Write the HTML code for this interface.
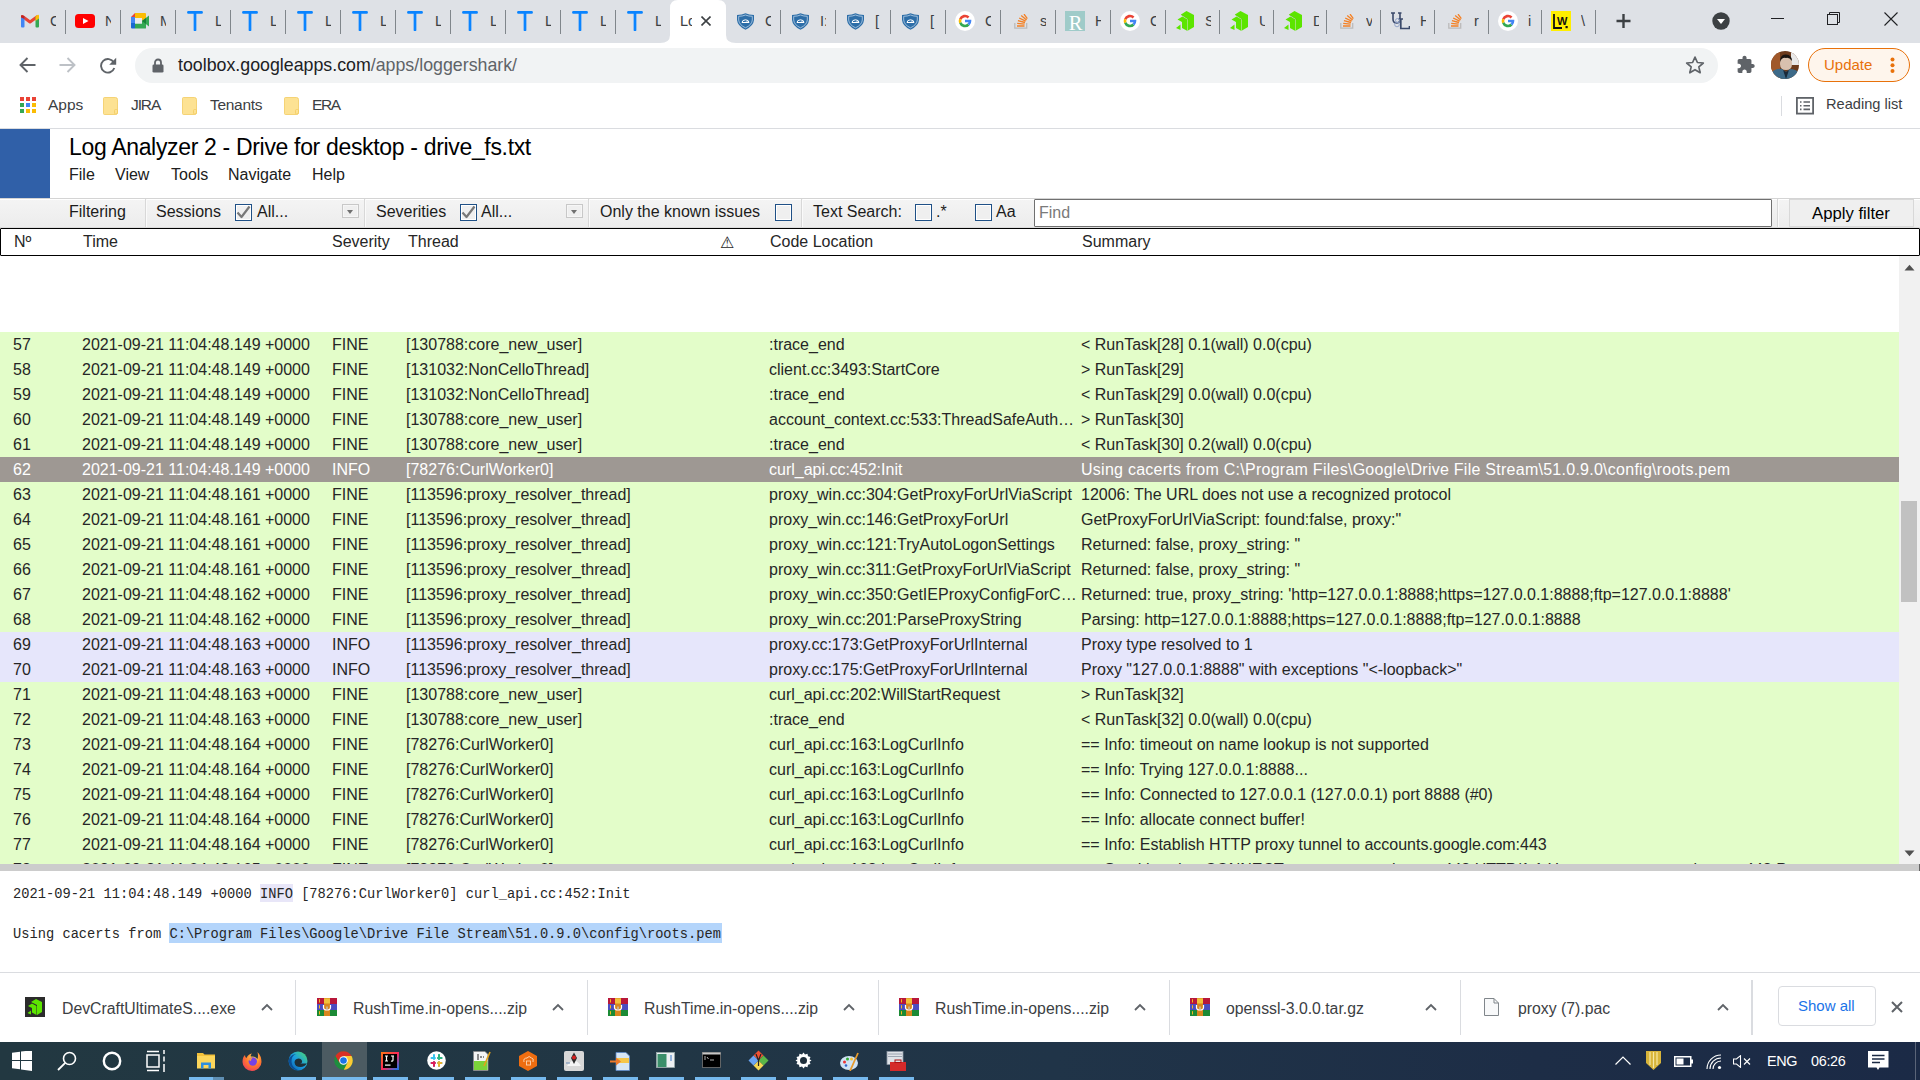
<!DOCTYPE html>
<html><head><meta charset="utf-8"><title>Log Analyzer</title>
<style>
*{margin:0;padding:0;box-sizing:border-box}
html,body{width:1920px;height:1080px;overflow:hidden;background:#fff;font-family:"Liberation Sans",sans-serif;position:relative}
.abs{position:absolute}
/* chrome tab strip */
#tabstrip{position:absolute;left:0;top:0;width:1920px;height:43px;background:#dee1e6}
.tsep{position:absolute;top:10px;width:1px;height:24px;background:#80868b}
#acttab{position:absolute;left:670px;top:0;width:56px;height:43px;background:#fff;border-radius:8px 8px 0 0}
/* toolbar */
#toolbar{position:absolute;left:0;top:43px;width:1920px;height:44px;background:#fff}
#omni{position:absolute;left:135px;top:48px;width:1583px;height:35px;background:#f1f3f4;border-radius:18px}
#url{position:absolute;left:178px;top:55px;font-size:17.8px;color:#202124}
#url span{color:#5f6368}
#bookmarks{position:absolute;left:0;top:87px;width:1920px;height:42px;background:#fff;border-bottom:1px solid #dadce0}
.bm{position:absolute;top:96px;font-size:15.5px;color:#3c4043}
/* app */
#bluesq{position:absolute;left:0;top:129px;width:50px;height:69px;background:#3060a8}
#title{position:absolute;left:69px;top:134px;font-size:23px;letter-spacing:-0.33px;color:#000}
.menu{position:absolute;top:166px;font-size:16px;color:#202020}
#filterbar{position:absolute;left:0;top:198px;width:1920px;height:30px;background:linear-gradient(#f4f4f4,#ececec);border-top:1px solid #d4d4d4;box-shadow:inset 0 1px 0 #fff, inset 0 -1px 0 #dcdcdc}
.ft{position:absolute;top:203px;font-size:16px;color:#1c1c1c}
.fsep{position:absolute;top:199px;width:2px;height:28px;border-left:1px solid #d8d8d8;border-right:1px solid #fafafa}
.cb{position:absolute;top:204px;width:17px;height:17px;border:1.5px solid #2d4f7c;background:#fff}
.dd{position:absolute;top:204px;width:17px;height:14px;border:1px solid #c8c8c8;background:#f4f4f4}
#find{position:absolute;left:1034px;top:199px;width:738px;height:28px;background:#fff;border:1px solid #707070;border-radius:1px}
#findt{position:absolute;left:1039px;top:204px;font-size:16px;color:#7a7a7a}
#apply{position:absolute;left:1789px;top:199px;width:125px;height:28px;background:#efefef;border:1px solid #d8d8d8}
#thead{position:absolute;left:0;top:228px;width:1920px;height:28px;border:1px solid #000;border-radius:1px;background:#fff}
.th{position:absolute;top:233px;font-size:16px;color:#262626}
/* rows */
.r{position:absolute;left:0;width:1899px;height:25px;background:#e3fdc9;font-size:16px;color:#262626;white-space:nowrap;overflow:hidden}
.r.info{background:#e6e6fb}
.r.sel{background:#9e9893;color:#fff}
.r span{position:absolute;top:4px}
.c0{left:13px}.c1{left:82px}.c2{left:332px}.c3{left:406px}.c4{left:769px;width:309px;overflow:hidden;text-overflow:ellipsis}.c5{left:1081px}
#rowclip{position:absolute;left:0;top:256px;width:1920px;height:608px;overflow:hidden}
#vscroll{position:absolute;left:1899px;top:256px;width:21px;height:608px;background:#f1f1f1}
#thumb{position:absolute;left:1901px;top:501px;width:16px;height:101px;background:#c1c1c1}
#splitter{position:absolute;left:0;top:864px;width:1920px;height:7px;background:#cccccc}
/* detail */
.mono{position:absolute;left:13px;font-family:"Liberation Mono",monospace;font-size:13.72px;color:#262626;white-space:pre}
/* download shelf */
#shelf{position:absolute;left:0;top:972px;width:1920px;height:70px;background:#fff;border-top:1px solid #dadce0}
.dl{position:absolute;top:1000px;font-size:15.8px;color:#3c4043}
.dsep{position:absolute;top:980px;width:1px;height:55px;background:#dadce0}
/* taskbar */
#taskbar{position:absolute;left:0;top:1042px;width:1920px;height:38px;background:linear-gradient(90deg,#223841 0%,#213645 35%,#203448 55%,#1d2d46 80%,#1b2a46 100%)}
.ttxt{position:absolute;top:13px;width:5.5px;height:19px;overflow:hidden;font-size:14.5px;color:#3c4043;white-space:nowrap}
#update{position:absolute;left:1808px;top:48px;width:102px;height:34px;border:1.5px solid #e8710a;border-radius:17px;background:#fef5ec}
#updt{position:absolute;left:1824px;top:56px;font-size:15px;color:#e8710a}
#showall{position:absolute;left:1778px;top:986px;width:98px;height:40px;border:1px solid #dadce0;border-radius:4px;background:#fff}
#showt{position:absolute;left:1798px;top:997px;font-size:15px;color:#1a73e8}

#hl1{position:absolute;left:260px;top:884px;width:33px;height:18px;background:#e8e6f8}
#hl2{position:absolute;left:169px;top:923px;width:553px;height:20px;background:#b4d5fb}

</style></head><body>
<div id="tabstrip"></div>
<div class="tsep" style="left:65.0px"></div>
<div class="tsep" style="left:120.0px"></div>
<div class="tsep" style="left:175.0px"></div>
<div class="tsep" style="left:230.0px"></div>
<div class="tsep" style="left:285.0px"></div>
<div class="tsep" style="left:340.0px"></div>
<div class="tsep" style="left:395.0px"></div>
<div class="tsep" style="left:450.0px"></div>
<div class="tsep" style="left:505.0px"></div>
<div class="tsep" style="left:560.0px"></div>
<div class="tsep" style="left:615.0px"></div>
<div class="tsep" style="left:780.0px"></div>
<div class="tsep" style="left:835.0px"></div>
<div class="tsep" style="left:890.0px"></div>
<div class="tsep" style="left:945.0px"></div>
<div class="tsep" style="left:1000.0px"></div>
<div class="tsep" style="left:1055.0px"></div>
<div class="tsep" style="left:1110.0px"></div>
<div class="tsep" style="left:1165.0px"></div>
<div class="tsep" style="left:1219.0px"></div>
<div class="tsep" style="left:1273.0px"></div>
<div class="tsep" style="left:1326.0px"></div>
<div class="tsep" style="left:1380.0px"></div>
<div class="tsep" style="left:1434.0px"></div>
<div class="tsep" style="left:1488.0px"></div>
<div class="tsep" style="left:1541.0px"></div>
<div class="tsep" style="left:1595.0px"></div>
<svg class="abs" style="left:660px;top:0" width="76" height="43" viewBox="0 0 76 43"><path d="M0 43 Q10 43 10 35 L10 8 Q10 0 18 0 L58 0 Q66 0 66 8 L66 35 Q66 43 76 43z" fill="#fff"/></svg>
<svg class="abs" style="left:21px;top:14px" width="18" height="14" viewBox="0 0 18 14" ><path d="M1.5 2.5 L9 8 L16.5 2.5" fill="none" stroke="#ea4335" stroke-width="3" stroke-linejoin="round"/><rect x="0" y="2.5" width="3.5" height="11" rx="1" fill="#4285f4"/><rect x="14.5" y="2.5" width="3.5" height="11" rx="1" fill="#34a853"/><path d="M14.5 2.2 L17 0.8 Q18 0.6 18 2 L18 4.5 L14.5 7z" fill="#fbbc04"/><path d="M0 2 Q0 0.5 1.5 1 L3.5 2.5 L3.5 5 L0 3.5z" fill="#c5221f"/></svg>
<div class="ttxt" style="left:50.0px">C</div>
<svg class="abs" style="left:75px;top:14px" width="20" height="14" viewBox="0 0 20 14" ><rect x="0" y="0" width="20" height="14" rx="3.5" fill="#ff0000"/><path d="M8 4 L13.5 7 L8 10z" fill="#fff"/></svg>
<div class="ttxt" style="left:105.0px">N</div>
<svg class="abs" style="left:131px;top:13px" width="18" height="16" viewBox="0 0 18 16" ><path d="M4 0 L14 0 Q15 0 15 1 L15 5 L11 8 L4 5z" fill="#fbbc04"/><path d="M0 4 L4 0 L4 4z" fill="#ea4335"/><rect x="0" y="4" width="4" height="6" fill="#4285f4"/><path d="M0 10 L4 10 L4 15.5 L1 15.5 Q0 15.5 0 14.5z" fill="#1967d2"/><path d="M4 10.5 L11 10.5 L11 8 L15 5.5 L15 15 Q15 15.5 14 15.5 L4 15.5z" fill="#34a853"/><path d="M11 8 L18 2.5 L18 13.5 L11 8z" fill="#34a853"/><path d="M11 8 L15 5 L15 11z" fill="#188038"/><rect x="4" y="5" width="7" height="5.5" fill="#e8eaed"/></svg>
<div class="ttxt" style="left:160.0px">M</div>
<svg class="abs" style="left:187px;top:11px" width="16" height="20" viewBox="0 0 16 20" ><path d="M1.4 1.4 H14.6 M8 1.4 V19" stroke="#0a84ff" stroke-width="2.7" stroke-linecap="round" fill="none"/></svg>
<div class="ttxt" style="left:215.0px">L</div>
<svg class="abs" style="left:242px;top:11px" width="16" height="20" viewBox="0 0 16 20" ><path d="M1.4 1.4 H14.6 M8 1.4 V19" stroke="#0a84ff" stroke-width="2.7" stroke-linecap="round" fill="none"/></svg>
<div class="ttxt" style="left:270.0px">L</div>
<svg class="abs" style="left:297px;top:11px" width="16" height="20" viewBox="0 0 16 20" ><path d="M1.4 1.4 H14.6 M8 1.4 V19" stroke="#0a84ff" stroke-width="2.7" stroke-linecap="round" fill="none"/></svg>
<div class="ttxt" style="left:325.0px">L</div>
<svg class="abs" style="left:352px;top:11px" width="16" height="20" viewBox="0 0 16 20" ><path d="M1.4 1.4 H14.6 M8 1.4 V19" stroke="#0a84ff" stroke-width="2.7" stroke-linecap="round" fill="none"/></svg>
<div class="ttxt" style="left:380.0px">L</div>
<svg class="abs" style="left:407px;top:11px" width="16" height="20" viewBox="0 0 16 20" ><path d="M1.4 1.4 H14.6 M8 1.4 V19" stroke="#0a84ff" stroke-width="2.7" stroke-linecap="round" fill="none"/></svg>
<div class="ttxt" style="left:435.0px">L</div>
<svg class="abs" style="left:462px;top:11px" width="16" height="20" viewBox="0 0 16 20" ><path d="M1.4 1.4 H14.6 M8 1.4 V19" stroke="#0a84ff" stroke-width="2.7" stroke-linecap="round" fill="none"/></svg>
<div class="ttxt" style="left:490.0px">L</div>
<svg class="abs" style="left:517px;top:11px" width="16" height="20" viewBox="0 0 16 20" ><path d="M1.4 1.4 H14.6 M8 1.4 V19" stroke="#0a84ff" stroke-width="2.7" stroke-linecap="round" fill="none"/></svg>
<div class="ttxt" style="left:545.0px">L</div>
<svg class="abs" style="left:572px;top:11px" width="16" height="20" viewBox="0 0 16 20" ><path d="M1.4 1.4 H14.6 M8 1.4 V19" stroke="#0a84ff" stroke-width="2.7" stroke-linecap="round" fill="none"/></svg>
<div class="ttxt" style="left:600.0px">L</div>
<svg class="abs" style="left:627px;top:11px" width="16" height="20" viewBox="0 0 16 20" ><path d="M1.4 1.4 H14.6 M8 1.4 V19" stroke="#0a84ff" stroke-width="2.7" stroke-linecap="round" fill="none"/></svg>
<div class="ttxt" style="left:655.0px">L</div>
<div class="ttxt" style="left:680px;width:12px">Lo</div>
<svg class="abs" style="left:701px;top:16px" width="10" height="10"><path d="M0.5 0.5 L9.5 9.5 M9.5 0.5 L0.5 9.5" stroke="#3c4043" stroke-width="1.6"/></svg>
<svg class="abs" style="left:737px;top:13px" width="17" height="17" viewBox="0 0 17 17" ><path d="M8.5 0.3 Q12 2 17 2 L17 7 Q16.5 13 8.5 16.7 Q0.5 13 0 7 L0 2 Q5 2 8.5 0.3z" fill="#2d6ea8"/><path d="M8.5 2 Q11.5 3.3 15.3 3.3 L15.3 7 Q15 11.8 8.5 14.8 Q2 11.8 1.7 7 L1.7 3.3 Q5.5 3.3 8.5 2z" fill="none" stroke="#cfe0f0" stroke-width="0.7"/><path d="M5 9.5 Q5 7 8.5 6.8 Q12 7 12 9.5z" fill="none" stroke="#fff" stroke-width="1"/><path d="M6.5 9.5 L11 9.5 L10.5 8.3z" fill="#fff"/></svg>
<div class="ttxt" style="left:765.0px">C</div>
<svg class="abs" style="left:792px;top:13px" width="17" height="17" viewBox="0 0 17 17" ><path d="M8.5 0.3 Q12 2 17 2 L17 7 Q16.5 13 8.5 16.7 Q0.5 13 0 7 L0 2 Q5 2 8.5 0.3z" fill="#2d6ea8"/><path d="M8.5 2 Q11.5 3.3 15.3 3.3 L15.3 7 Q15 11.8 8.5 14.8 Q2 11.8 1.7 7 L1.7 3.3 Q5.5 3.3 8.5 2z" fill="none" stroke="#cfe0f0" stroke-width="0.7"/><path d="M5 9.5 Q5 7 8.5 6.8 Q12 7 12 9.5z" fill="none" stroke="#fff" stroke-width="1"/><path d="M6.5 9.5 L11 9.5 L10.5 8.3z" fill="#fff"/></svg>
<div class="ttxt" style="left:820.0px">I:</div>
<svg class="abs" style="left:847px;top:13px" width="17" height="17" viewBox="0 0 17 17" ><path d="M8.5 0.3 Q12 2 17 2 L17 7 Q16.5 13 8.5 16.7 Q0.5 13 0 7 L0 2 Q5 2 8.5 0.3z" fill="#2d6ea8"/><path d="M8.5 2 Q11.5 3.3 15.3 3.3 L15.3 7 Q15 11.8 8.5 14.8 Q2 11.8 1.7 7 L1.7 3.3 Q5.5 3.3 8.5 2z" fill="none" stroke="#cfe0f0" stroke-width="0.7"/><path d="M5 9.5 Q5 7 8.5 6.8 Q12 7 12 9.5z" fill="none" stroke="#fff" stroke-width="1"/><path d="M6.5 9.5 L11 9.5 L10.5 8.3z" fill="#fff"/></svg>
<div class="ttxt" style="left:875.0px">[</div>
<svg class="abs" style="left:902px;top:13px" width="17" height="17" viewBox="0 0 17 17" ><path d="M8.5 0.3 Q12 2 17 2 L17 7 Q16.5 13 8.5 16.7 Q0.5 13 0 7 L0 2 Q5 2 8.5 0.3z" fill="#2d6ea8"/><path d="M8.5 2 Q11.5 3.3 15.3 3.3 L15.3 7 Q15 11.8 8.5 14.8 Q2 11.8 1.7 7 L1.7 3.3 Q5.5 3.3 8.5 2z" fill="none" stroke="#cfe0f0" stroke-width="0.7"/><path d="M5 9.5 Q5 7 8.5 6.8 Q12 7 12 9.5z" fill="none" stroke="#fff" stroke-width="1"/><path d="M6.5 9.5 L11 9.5 L10.5 8.3z" fill="#fff"/></svg>
<div class="ttxt" style="left:930.0px">[</div>
<svg class="abs" style="left:955px;top:11px" width="20" height="20" viewBox="0 0 20 20" ><circle cx="10" cy="10" r="10" fill="#fff"/><path d="M13.54 6.46 A5 5 0 0 0 5.3 8.29" fill="none" stroke="#ea4335" stroke-width="2.6"/><path d="M5.3 8.29 A5 5 0 0 0 5.3 11.71" fill="none" stroke="#fbbc04" stroke-width="2.6"/><path d="M5.3 11.71 A5 5 0 0 0 13.54 13.54" fill="none" stroke="#34a853" stroke-width="2.6"/><path d="M13.54 13.54 A5 5 0 0 0 15 10 L10 10" fill="none" stroke="#4285f4" stroke-width="2.6"/></svg>
<div class="ttxt" style="left:985.0px">C</div>
<svg class="abs" style="left:1014px;top:14px" width="14" height="15" viewBox="0 0 14 15" ><path d="M0.8 9 V14.2 H12.7 V9" fill="none" stroke="#bcbbbb" stroke-width="1.3"/><path d="M3 12 H10.5 M3.2 9.4 L10.6 10.2 M3.9 6.7 L11 8.5 M5.2 4 L11.7 7.2 M7.2 1.6 L12.6 6 M10 0.1 L13.3 4.6" stroke="#f48024" stroke-width="1.35" fill="none"/></svg>
<div class="ttxt" style="left:1040.0px">s</div>
<svg class="abs" style="left:1065px;top:11px" width="20" height="20" viewBox="0 0 20 20" ><rect width="20" height="20" fill="#9fcbc9"/><text x="10.5" y="18.6" text-anchor="middle" font-family="Liberation Serif" font-size="20.5" fill="#fff">R</text></svg>
<div class="ttxt" style="left:1095.0px">H</div>
<svg class="abs" style="left:1120px;top:11px" width="20" height="20" viewBox="0 0 20 20" ><circle cx="10" cy="10" r="10" fill="#fff"/><path d="M13.54 6.46 A5 5 0 0 0 5.3 8.29" fill="none" stroke="#ea4335" stroke-width="2.6"/><path d="M5.3 8.29 A5 5 0 0 0 5.3 11.71" fill="none" stroke="#fbbc04" stroke-width="2.6"/><path d="M5.3 11.71 A5 5 0 0 0 13.54 13.54" fill="none" stroke="#34a853" stroke-width="2.6"/><path d="M13.54 13.54 A5 5 0 0 0 15 10 L10 10" fill="none" stroke="#4285f4" stroke-width="2.6"/></svg>
<div class="ttxt" style="left:1150.0px">C</div>
<svg class="abs" style="left:1176px;top:11px" width="18" height="20" viewBox="0 0 18 20" ><path d="M5 3.5 L10.5 0 L18 4 L18 16 L12 19.5 L12 8z" fill="#5ce500"/><path d="M1.5 8.5 L6.5 5.5 L11.5 8.5 L11.5 20 L6 17 L6 11z" fill="#5ce500"/><path d="M0 17 L4.5 13.5 L4.5 19z" fill="#5ce500"/><path d="M5 3.5 L12 8 L12 9" stroke="#4fc400" stroke-width="0.6" fill="none"/></svg>
<div class="ttxt" style="left:1205.0px">S</div>
<svg class="abs" style="left:1230px;top:11px" width="18" height="20" viewBox="0 0 18 20" ><path d="M5 3.5 L10.5 0 L18 4 L18 16 L12 19.5 L12 8z" fill="#5ce500"/><path d="M1.5 8.5 L6.5 5.5 L11.5 8.5 L11.5 20 L6 17 L6 11z" fill="#5ce500"/><path d="M0 17 L4.5 13.5 L4.5 19z" fill="#5ce500"/><path d="M5 3.5 L12 8 L12 9" stroke="#4fc400" stroke-width="0.6" fill="none"/></svg>
<div class="ttxt" style="left:1259.0px">U</div>
<svg class="abs" style="left:1284px;top:11px" width="18" height="20" viewBox="0 0 18 20" ><path d="M5 3.5 L10.5 0 L18 4 L18 16 L12 19.5 L12 8z" fill="#5ce500"/><path d="M1.5 8.5 L6.5 5.5 L11.5 8.5 L11.5 20 L6 17 L6 11z" fill="#5ce500"/><path d="M0 17 L4.5 13.5 L4.5 19z" fill="#5ce500"/><path d="M5 3.5 L12 8 L12 9" stroke="#4fc400" stroke-width="0.6" fill="none"/></svg>
<div class="ttxt" style="left:1313.0px">D</div>
<svg class="abs" style="left:1340px;top:14px" width="14" height="15" viewBox="0 0 14 15" ><path d="M0.8 9 V14.2 H12.7 V9" fill="none" stroke="#bcbbbb" stroke-width="1.3"/><path d="M3 12 H10.5 M3.2 9.4 L10.6 10.2 M3.9 6.7 L11 8.5 M5.2 4 L11.7 7.2 M7.2 1.6 L12.6 6 M10 0.1 L13.3 4.6" stroke="#f48024" stroke-width="1.35" fill="none"/></svg>
<div class="ttxt" style="left:1366.0px">v</div>
<svg class="abs" style="left:1390px;top:12px" width="20" height="18" viewBox="0 0 20 18" ><path d="M1 1 H5 M3 1 V7 Q3 11 6.5 11 Q10 11 10 7 V1 M8 1 H11.5" fill="none" stroke="#3b4a6b" stroke-width="1.6"/><path d="M8.5 7 H13 M10.8 7 V16.5 H19.5 V14" fill="none" stroke="#3b4a6b" stroke-width="1.7"/><circle cx="7.5" cy="8.5" r="2" fill="none" stroke="#8da0c8" stroke-width="0.9"/><circle cx="7" cy="12.5" r="2.3" fill="none" stroke="#8da0c8" stroke-width="0.9"/></svg>
<div class="ttxt" style="left:1420.0px">H</div>
<svg class="abs" style="left:1448px;top:14px" width="14" height="15" viewBox="0 0 14 15" ><path d="M0.8 9 V14.2 H12.7 V9" fill="none" stroke="#bcbbbb" stroke-width="1.3"/><path d="M3 12 H10.5 M3.2 9.4 L10.6 10.2 M3.9 6.7 L11 8.5 M5.2 4 L11.7 7.2 M7.2 1.6 L12.6 6 M10 0.1 L13.3 4.6" stroke="#f48024" stroke-width="1.35" fill="none"/></svg>
<div class="ttxt" style="left:1474.0px">r</div>
<svg class="abs" style="left:1498px;top:11px" width="20" height="20" viewBox="0 0 20 20" ><circle cx="10" cy="10" r="10" fill="#fff"/><path d="M13.54 6.46 A5 5 0 0 0 5.3 8.29" fill="none" stroke="#ea4335" stroke-width="2.6"/><path d="M5.3 8.29 A5 5 0 0 0 5.3 11.71" fill="none" stroke="#fbbc04" stroke-width="2.6"/><path d="M5.3 11.71 A5 5 0 0 0 13.54 13.54" fill="none" stroke="#34a853" stroke-width="2.6"/><path d="M13.54 13.54 A5 5 0 0 0 15 10 L10 10" fill="none" stroke="#4285f4" stroke-width="2.6"/></svg>
<div class="ttxt" style="left:1528.0px">i</div>
<svg class="abs" style="left:1551px;top:11px" width="20" height="20" viewBox="0 0 20 20" ><rect width="20" height="20" fill="#ffef00"/><path d="M3 3 V17 H11" stroke="#111" stroke-width="1.8" fill="none"/><text x="6" y="14" font-family="Liberation Sans" font-weight="bold" font-size="11" fill="#111">W</text><rect x="14.5" y="15" width="2.2" height="2.2" fill="#111"/></svg>
<div class="ttxt" style="left:1581.0px">\</div>
<svg class="abs" style="left:1616px;top:13px" width="15" height="16"><path d="M7.5 1 V15 M0.5 8 H14.5" stroke="#3c4043" stroke-width="2.4"/></svg>
<svg class="abs" style="left:1712px;top:12px" width="18" height="18"><circle cx="9" cy="9" r="8.7" fill="#3c4043"/><path d="M5 7 L13 7 L9 12z" fill="#fff"/></svg>
<div class="abs" style="left:1771px;top:18px;width:13px;height:1px;background:#202124"></div>
<svg class="abs" style="left:1826px;top:11px" width="15" height="15"><path d="M3.5 3.5 V1.5 H13.5 V11.5 H11.5" fill="none" stroke="#202124" stroke-width="1"/><rect x="1.5" y="3.5" width="10" height="10" fill="none" stroke="#202124" stroke-width="1"/></svg>
<svg class="abs" style="left:1884px;top:12px" width="14" height="14"><path d="M0.5 0.5 L13.5 13.5 M13.5 0.5 L0.5 13.5" stroke="#202124" stroke-width="1.1"/></svg>
<div id="omni"></div>
<svg class="abs" style="left:19px;top:57px" width="17" height="16"><path d="M16.5 8 H2 M8.5 1 L1.5 8 L8.5 15" fill="none" stroke="#5f6368" stroke-width="1.9"/></svg>
<svg class="abs" style="left:59px;top:57px" width="17" height="16"><path d="M0.5 8 H15 M8.5 1 L15.5 8 L8.5 15" fill="none" stroke="#bdc1c6" stroke-width="1.9"/></svg>
<svg class="abs" style="left:99px;top:57px" width="18" height="17"><path d="M14.8 5.5 A6.8 6.8 0 1 0 15.3 11" fill="none" stroke="#5f6368" stroke-width="1.9"/><path d="M17.2 0.8 V7.8 H10.2z" fill="#5f6368"/></svg>
<svg class="abs" style="left:152px;top:58px" width="12" height="15"><path d="M3 7 V4.5 A3 3 0 0 1 9 4.5 V7" fill="none" stroke="#5f6368" stroke-width="1.8"/><rect x="0.5" y="6.5" width="11" height="8" rx="1.3" fill="#5f6368"/></svg>
<div id="url">toolbox.googleapps.com<span>/apps/loggershark/</span></div>
<svg class="abs" style="left:1685px;top:55px" width="20" height="20" viewBox="0 0 24 24"><path d="M12 2.5 L14.9 9 L22 9.6 L16.6 14.3 L18.2 21.3 L12 17.6 L5.8 21.3 L7.4 14.3 L2 9.6 L9.1 9z" fill="none" stroke="#5f6368" stroke-width="2" stroke-linejoin="round"/></svg>
<svg class="abs" style="left:1736px;top:55px" width="19.5" height="19.5" viewBox="0 0 24 24"><path d="M20.5 11H19V7c0-1.1-.9-2-2-2h-4V3.5C13 2.12 11.88 1 10.5 1S8 2.12 8 3.5V5H4c-1.1 0-1.99.9-1.99 2v3.8H3.5c1.49 0 2.7 1.21 2.7 2.7s-1.21 2.7-2.7 2.7H2V20c0 1.1.9 2 2 2h3.8v-1.5c0-1.49 1.21-2.7 2.7-2.7 1.49 0 2.7 1.21 2.7 2.7V22H17c1.1 0 2-.9 2-2v-4h1.5c1.38 0 2.5-1.12 2.5-2.5S21.88 11 20.5 11z" fill="#5f6368"/></svg>
<svg class="abs" style="left:1771px;top:51px" width="28" height="28"><defs><clipPath id="av"><circle cx="14" cy="14" r="14"/></clipPath></defs><g clip-path="url(#av)"><rect width="28" height="28" fill="#6b3a1c"/><rect x="0" y="0" width="9" height="28" fill="#a0582a"/><rect x="20" y="0" width="8" height="14" fill="#e8e8e8"/><path d="M9 13 Q9 5 15 5 Q21 5 21 13 Q21 19 15 19 Q9 19 9 13z" fill="#d8c0ae"/><path d="M9 11 Q9 3 15 3.5 Q21 4 21 10 Q18 6 15 7 Q11 6 9 11z" fill="#1a1410"/><path d="M0 28 L0 22 Q5 17 11 18 L15 21 L19 18 Q25 18 28 22 L28 28z" fill="#3d6a88"/><path d="M12 19 L15 28 L18 19 L15 21z" fill="#1a2a3a"/></g></svg>
<div id="update"></div><div id="updt">Update</div>
<svg class="abs" style="left:1890px;top:57px" width="5" height="17"><circle cx="2.5" cy="2.5" r="2" fill="#e8710a"/><circle cx="2.5" cy="8.3" r="2" fill="#e8710a"/><circle cx="2.5" cy="14.1" r="2" fill="#e8710a"/></svg>
<div id="bookmarks"></div>
<svg class="abs" style="left:20px;top:97px" width="16" height="16" viewBox="0 0 16 16" ><rect x="0" y="0" width="4" height="4" fill="#ea4335"/><rect x="6" y="0" width="4" height="4" fill="#ea4335"/><rect x="12" y="0" width="4" height="4" fill="#ea4335"/><rect x="0" y="6" width="4" height="4" fill="#34a853"/><rect x="6" y="6" width="4" height="4" fill="#4285f4"/><rect x="12" y="6" width="4" height="4" fill="#fbbc04"/><rect x="0" y="12" width="4" height="4" fill="#34a853"/><rect x="6" y="12" width="4" height="4" fill="#fbbc04"/><rect x="12" y="12" width="4" height="4" fill="#fbbc04"/></svg>
<svg class="abs" style="left:103px;top:97px" width="16" height="18" viewBox="0 0 16 18" ><path d="M1.5 0.5 H12.5 Q14.5 0.5 14.5 2.5 V15.5 Q14.5 17.5 12.5 17.5 H1.5 Q0.5 17.5 0.5 16.5 V1.5 Q0.5 0.5 1.5 0.5z" fill="#fde293" stroke="#f3cb61" stroke-width="0.8"/><rect x="11.5" y="12.5" width="3" height="4.5" rx="1" fill="none" stroke="#f3cb61" stroke-width="0.8"/></svg>
<svg class="abs" style="left:182px;top:97px" width="16" height="18" viewBox="0 0 16 18" ><path d="M1.5 0.5 H12.5 Q14.5 0.5 14.5 2.5 V15.5 Q14.5 17.5 12.5 17.5 H1.5 Q0.5 17.5 0.5 16.5 V1.5 Q0.5 0.5 1.5 0.5z" fill="#fde293" stroke="#f3cb61" stroke-width="0.8"/><rect x="11.5" y="12.5" width="3" height="4.5" rx="1" fill="none" stroke="#f3cb61" stroke-width="0.8"/></svg>
<svg class="abs" style="left:284px;top:97px" width="16" height="18" viewBox="0 0 16 18" ><path d="M1.5 0.5 H12.5 Q14.5 0.5 14.5 2.5 V15.5 Q14.5 17.5 12.5 17.5 H1.5 Q0.5 17.5 0.5 16.5 V1.5 Q0.5 0.5 1.5 0.5z" fill="#fde293" stroke="#f3cb61" stroke-width="0.8"/><rect x="11.5" y="12.5" width="3" height="4.5" rx="1" fill="none" stroke="#f3cb61" stroke-width="0.8"/></svg>
<div class="bm" style="left:48px">Apps</div>
<div class="bm" style="left:131px;letter-spacing:-1.1px">JIRA</div>
<div class="bm" style="left:210px;letter-spacing:-0.3px">Tenants</div>
<div class="bm" style="left:312px;letter-spacing:-1.4px">ERA</div>
<div class="abs" style="left:1781px;top:96px;width:1px;height:20px;background:#dadce0"></div>
<svg class="abs" style="left:1796px;top:97px" width="18" height="18" viewBox="0 0 18 18" ><rect x="0.9" y="0.9" width="16.2" height="15.7" fill="none" stroke="#5f6368" stroke-width="1.8"/><path d="M4 5 H5.5 M7.5 5 H14 M4 8.7 H5.5 M7.5 8.7 H14 M4 12.4 H5.5 M7.5 12.4 H14" stroke="#5f6368" stroke-width="1.6"/></svg>
<div class="bm" style="left:1826px;font-size:14.6px">Reading list</div>

<div id="bluesq"></div>
<div id="title">Log Analyzer 2 - Drive for desktop - drive_fs.txt</div>
<div class="menu" style="left:69px">File</div>
<div class="menu" style="left:115px">View</div>
<div class="menu" style="left:171px">Tools</div>
<div class="menu" style="left:228px">Navigate</div>
<div class="menu" style="left:312px">Help</div>

<div id="filterbar"></div>
<div class="ft" style="left:69px">Filtering</div>
<div class="fsep" style="left:145px"></div>
<div class="ft" style="left:156px">Sessions</div>
<svg class="abs" style="left:235px;top:204px" width="17" height="17"><rect x="0.5" y="0.5" width="16" height="16" fill="#efefef" stroke="#1f5086" stroke-width="1"/><rect x="1.5" y="1.5" width="14" height="14" fill="none" stroke="#fff" stroke-width="1"/><path d="M2.5 8.5 L6.5 13 L14.5 2.5" fill="none" stroke="#787878" stroke-width="2.2" stroke-linejoin="round"/></svg>
<div class="ft" style="left:257px">All...</div>
<svg class="abs" style="left:342px;top:204px" width="17" height="14"><rect x="0.5" y="0.5" width="16" height="13" fill="#efefef" stroke="#c8c8c8" stroke-width="1"/><rect x="1.5" y="1.5" width="14" height="11" fill="none" stroke="#f6f6f6" stroke-width="1"/><path d="M5 6 L11 6 L8 10z" fill="#707070"/></svg>
<div class="fsep" style="left:364px"></div>
<div class="ft" style="left:376px">Severities</div>
<svg class="abs" style="left:460px;top:204px" width="17" height="17"><rect x="0.5" y="0.5" width="16" height="16" fill="#efefef" stroke="#1f5086" stroke-width="1"/><rect x="1.5" y="1.5" width="14" height="14" fill="none" stroke="#fff" stroke-width="1"/><path d="M2.5 8.5 L6.5 13 L14.5 2.5" fill="none" stroke="#787878" stroke-width="2.2" stroke-linejoin="round"/></svg>
<div class="ft" style="left:481px">All...</div>
<svg class="abs" style="left:566px;top:204px" width="17" height="14"><rect x="0.5" y="0.5" width="16" height="13" fill="#efefef" stroke="#c8c8c8" stroke-width="1"/><rect x="1.5" y="1.5" width="14" height="11" fill="none" stroke="#f6f6f6" stroke-width="1"/><path d="M5 6 L11 6 L8 10z" fill="#707070"/></svg>
<div class="fsep" style="left:588px"></div>
<div class="ft" style="left:600px">Only the known issues</div>
<svg class="abs" style="left:775px;top:204px" width="17" height="17"><rect x="0.5" y="0.5" width="16" height="16" fill="#efefef" stroke="#1f5086" stroke-width="1"/><rect x="1.5" y="1.5" width="14" height="14" fill="none" stroke="#fff" stroke-width="1"/></svg>
<div class="fsep" style="left:801px"></div>
<div class="ft" style="left:813px">Text Search:</div>
<svg class="abs" style="left:915px;top:204px" width="17" height="17"><rect x="0.5" y="0.5" width="16" height="16" fill="#efefef" stroke="#1f5086" stroke-width="1"/><rect x="1.5" y="1.5" width="14" height="14" fill="none" stroke="#fff" stroke-width="1"/></svg>
<div class="ft" style="left:936px">.*</div>
<svg class="abs" style="left:975px;top:204px" width="17" height="17"><rect x="0.5" y="0.5" width="16" height="16" fill="#efefef" stroke="#1f5086" stroke-width="1"/><rect x="1.5" y="1.5" width="14" height="14" fill="none" stroke="#fff" stroke-width="1"/></svg>
<div class="ft" style="left:996px">Aa</div>
<div id="find"></div>
<div id="findt">Find</div>
<div class="fsep" style="left:1777px"></div>
<div id="apply"></div>
<div class="ft" style="left:1812px;top:204px;font-size:16.7px;color:#000">Apply filter</div>

<div id="thead"></div>
<div class="th" style="left:14px">Nº</div>
<div class="th" style="left:83px">Time</div>
<div class="th" style="left:332px">Severity</div>
<div class="th" style="left:408px">Thread</div>
<div class="th" style="left:720px">⚠</div>
<div class="th" style="left:770px">Code Location</div>
<div class="th" style="left:1082px">Summary</div>

<div id="rowclip"><div class="r" style="top:76px"><span class="c0">57</span><span class="c1">2021-09-21 11:04:48.149 +0000</span><span class="c2">FINE</span><span class="c3">[130788:core_new_user]</span><span class="c4">:trace_end</span><span class="c5">&lt; RunTask[28] 0.1(wall) 0.0(cpu)</span></div>
<div class="r" style="top:101px"><span class="c0">58</span><span class="c1">2021-09-21 11:04:48.149 +0000</span><span class="c2">FINE</span><span class="c3">[131032:NonCelloThread]</span><span class="c4">client.cc:3493:StartCore</span><span class="c5">&gt; RunTask[29]</span></div>
<div class="r" style="top:126px"><span class="c0">59</span><span class="c1">2021-09-21 11:04:48.149 +0000</span><span class="c2">FINE</span><span class="c3">[131032:NonCelloThread]</span><span class="c4">:trace_end</span><span class="c5">&lt; RunTask[29] 0.0(wall) 0.0(cpu)</span></div>
<div class="r" style="top:151px"><span class="c0">60</span><span class="c1">2021-09-21 11:04:48.149 +0000</span><span class="c2">FINE</span><span class="c3">[130788:core_new_user]</span><span class="c4">account_context.cc:533:ThreadSafeAuthToken</span><span class="c5">&gt; RunTask[30]</span></div>
<div class="r" style="top:176px"><span class="c0">61</span><span class="c1">2021-09-21 11:04:48.149 +0000</span><span class="c2">FINE</span><span class="c3">[130788:core_new_user]</span><span class="c4">:trace_end</span><span class="c5">&lt; RunTask[30] 0.2(wall) 0.0(cpu)</span></div>
<div class="r sel" style="top:201px"><span class="c0">62</span><span class="c1">2021-09-21 11:04:48.149 +0000</span><span class="c2">INFO</span><span class="c3">[78276:CurlWorker0]</span><span class="c4">curl_api.cc:452:Init</span><span class="c5" style="letter-spacing:0.26px">Using cacerts from C:\Program Files\Google\Drive File Stream\51.0.9.0\config\roots.pem</span></div>
<div class="r" style="top:226px"><span class="c0">63</span><span class="c1">2021-09-21 11:04:48.161 +0000</span><span class="c2">FINE</span><span class="c3">[113596:proxy_resolver_thread]</span><span class="c4">proxy_win.cc:304:GetProxyForUrlViaScript</span><span class="c5">12006: The URL does not use a recognized protocol</span></div>
<div class="r" style="top:251px"><span class="c0">64</span><span class="c1">2021-09-21 11:04:48.161 +0000</span><span class="c2">FINE</span><span class="c3">[113596:proxy_resolver_thread]</span><span class="c4">proxy_win.cc:146:GetProxyForUrl</span><span class="c5">GetProxyForUrlViaScript: found:false, proxy:"</span></div>
<div class="r" style="top:276px"><span class="c0">65</span><span class="c1">2021-09-21 11:04:48.161 +0000</span><span class="c2">FINE</span><span class="c3">[113596:proxy_resolver_thread]</span><span class="c4">proxy_win.cc:121:TryAutoLogonSettings</span><span class="c5">Returned: false, proxy_string: "</span></div>
<div class="r" style="top:301px"><span class="c0">66</span><span class="c1">2021-09-21 11:04:48.161 +0000</span><span class="c2">FINE</span><span class="c3">[113596:proxy_resolver_thread]</span><span class="c4">proxy_win.cc:311:GetProxyForUrlViaScript</span><span class="c5">Returned: false, proxy_string: "</span></div>
<div class="r" style="top:326px"><span class="c0">67</span><span class="c1">2021-09-21 11:04:48.162 +0000</span><span class="c2">FINE</span><span class="c3">[113596:proxy_resolver_thread]</span><span class="c4">proxy_win.cc:350:GetIEProxyConfigForCurrentUser</span><span class="c5">Returned: true, proxy_string: 'http=127.0.0.1:8888;https=127.0.0.1:8888;ftp=127.0.0.1:8888'</span></div>
<div class="r" style="top:351px"><span class="c0">68</span><span class="c1">2021-09-21 11:04:48.162 +0000</span><span class="c2">FINE</span><span class="c3">[113596:proxy_resolver_thread]</span><span class="c4">proxy_win.cc:201:ParseProxyString</span><span class="c5">Parsing: http=127.0.0.1:8888;https=127.0.0.1:8888;ftp=127.0.0.1:8888</span></div>
<div class="r info" style="top:376px"><span class="c0">69</span><span class="c1">2021-09-21 11:04:48.163 +0000</span><span class="c2">INFO</span><span class="c3">[113596:proxy_resolver_thread]</span><span class="c4">proxy.cc:173:GetProxyForUrlInternal</span><span class="c5">Proxy type resolved to 1</span></div>
<div class="r info" style="top:401px"><span class="c0">70</span><span class="c1">2021-09-21 11:04:48.163 +0000</span><span class="c2">INFO</span><span class="c3">[113596:proxy_resolver_thread]</span><span class="c4">proxy.cc:175:GetProxyForUrlInternal</span><span class="c5">Proxy "127.0.0.1:8888" with exceptions "&lt;-loopback&gt;"</span></div>
<div class="r" style="top:426px"><span class="c0">71</span><span class="c1">2021-09-21 11:04:48.163 +0000</span><span class="c2">FINE</span><span class="c3">[130788:core_new_user]</span><span class="c4">curl_api.cc:202:WillStartRequest</span><span class="c5">&gt; RunTask[32]</span></div>
<div class="r" style="top:451px"><span class="c0">72</span><span class="c1">2021-09-21 11:04:48.163 +0000</span><span class="c2">FINE</span><span class="c3">[130788:core_new_user]</span><span class="c4">:trace_end</span><span class="c5">&lt; RunTask[32] 0.0(wall) 0.0(cpu)</span></div>
<div class="r" style="top:476px"><span class="c0">73</span><span class="c1">2021-09-21 11:04:48.164 +0000</span><span class="c2">FINE</span><span class="c3">[78276:CurlWorker0]</span><span class="c4">curl_api.cc:163:LogCurlInfo</span><span class="c5">== Info: timeout on name lookup is not supported</span></div>
<div class="r" style="top:501px"><span class="c0">74</span><span class="c1">2021-09-21 11:04:48.164 +0000</span><span class="c2">FINE</span><span class="c3">[78276:CurlWorker0]</span><span class="c4">curl_api.cc:163:LogCurlInfo</span><span class="c5">== Info: Trying 127.0.0.1:8888...</span></div>
<div class="r" style="top:526px"><span class="c0">75</span><span class="c1">2021-09-21 11:04:48.164 +0000</span><span class="c2">FINE</span><span class="c3">[78276:CurlWorker0]</span><span class="c4">curl_api.cc:163:LogCurlInfo</span><span class="c5">== Info: Connected to 127.0.0.1 (127.0.0.1) port 8888 (#0)</span></div>
<div class="r" style="top:551px"><span class="c0">76</span><span class="c1">2021-09-21 11:04:48.164 +0000</span><span class="c2">FINE</span><span class="c3">[78276:CurlWorker0]</span><span class="c4">curl_api.cc:163:LogCurlInfo</span><span class="c5">== Info: allocate connect buffer!</span></div>
<div class="r" style="top:576px"><span class="c0">77</span><span class="c1">2021-09-21 11:04:48.164 +0000</span><span class="c2">FINE</span><span class="c3">[78276:CurlWorker0]</span><span class="c4">curl_api.cc:163:LogCurlInfo</span><span class="c5">== Info: Establish HTTP proxy tunnel to accounts.google.com:443</span></div>
<div class="r" style="top:601px"><span class="c0">78</span><span class="c1">2021-09-21 11:04:48.165 +0000</span><span class="c2">FINE</span><span class="c3">[78276:CurlWorker0]</span><span class="c4">curl_api.cc:163:LogCurlInfo</span><span class="c5">== Send header: CONNECT accounts.google.com:443 HTTP/1.1 Host: accounts.google.com:443 P</span></div></div>
<div id="vscroll"></div>
<div id="thumb"></div>
<div id="splitter"></div>
<div class="abs" style="left:1919px;top:864px;width:1px;height:7px;background:#666"></div>
<svg class="abs" style="left:1904px;top:264px" width="11" height="7"><path d="M0.5 6.5 L5.5 0.8 L10.5 6.5z" fill="#505050"/></svg>
<svg class="abs" style="left:1904px;top:850px" width="11" height="7"><path d="M0.5 0.5 L5.5 6.2 L10.5 0.5z" fill="#505050"/></svg>

<div id="hl1"></div><div id="hl2"></div>
<div class="mono" style="top:887px">2021-09-21 11:04:48.149 +0000 INFO [78276:CurlWorker0] curl_api.cc:452:Init</div>
<div class="mono" style="top:927px">Using cacerts from C:\Program Files\Google\Drive File Stream\51.0.9.0\config\roots.pem</div>

<div id="shelf"></div>
<svg class="abs" style="left:25px;top:997px" width="20" height="20" viewBox="0 0 20 20"><rect width="20" height="20" fill="#2b2b2b"/><path d="M6 5 L11 2 L17 5 L17 15 L12 18 L12 8z" fill="#5ce500"/><path d="M3 9 L7 6.5 L11.5 9 L11.5 18 L7 15.5 L7 11z" fill="#5ce500"/><path d="M2.5 16 L6 13.5 L6 17.5z" fill="#5ce500"/></svg>
<div class="dl" style="left:62px">DevCraftUltimateS....exe</div>
<svg class="abs" style="left:261px;top:1003px" width="12" height="8" viewBox="0 0 12 8"><path d="M1 7 L6 2 L11 7" fill="none" stroke="#5f6368" stroke-width="1.8"/></svg>
<div class="dsep" style="left:295px"></div>
<svg class="abs" style="left:317px;top:998px" width="20" height="18" viewBox="0 0 20 18"><rect x="0" y="0" width="20" height="6" fill="#b8173a"/><rect x="0" y="6" width="20" height="6" fill="#4b4cc0"/><rect x="0" y="12" width="20" height="6" fill="#1b8a35"/><path d="M2.5 1.2 V4.5 M2.5 7.2 V10.5 M2.5 13.2 V16.5" stroke="#f5b81c" stroke-width="1"/><rect x="7" y="0" width="6" height="18" fill="#d9861e"/><rect x="7" y="0.5" width="6" height="5" fill="#f2c13a"/><path d="M6.5 7 V9.5 Q6.5 12 10 12 Q13.5 12 13.5 9.5 V7" fill="none" stroke="#fff" stroke-width="1.2"/><rect x="9.3" y="8.5" width="1.4" height="3" fill="#c0c0c0"/></svg>
<div class="dl" style="left:353px">RushTime.in-opens....zip</div>
<svg class="abs" style="left:552px;top:1003px" width="12" height="8" viewBox="0 0 12 8"><path d="M1 7 L6 2 L11 7" fill="none" stroke="#5f6368" stroke-width="1.8"/></svg>
<div class="dsep" style="left:587px"></div>
<svg class="abs" style="left:608px;top:998px" width="20" height="18" viewBox="0 0 20 18"><rect x="0" y="0" width="20" height="6" fill="#b8173a"/><rect x="0" y="6" width="20" height="6" fill="#4b4cc0"/><rect x="0" y="12" width="20" height="6" fill="#1b8a35"/><path d="M2.5 1.2 V4.5 M2.5 7.2 V10.5 M2.5 13.2 V16.5" stroke="#f5b81c" stroke-width="1"/><rect x="7" y="0" width="6" height="18" fill="#d9861e"/><rect x="7" y="0.5" width="6" height="5" fill="#f2c13a"/><path d="M6.5 7 V9.5 Q6.5 12 10 12 Q13.5 12 13.5 9.5 V7" fill="none" stroke="#fff" stroke-width="1.2"/><rect x="9.3" y="8.5" width="1.4" height="3" fill="#c0c0c0"/></svg>
<div class="dl" style="left:644px">RushTime.in-opens....zip</div>
<svg class="abs" style="left:843px;top:1003px" width="12" height="8" viewBox="0 0 12 8"><path d="M1 7 L6 2 L11 7" fill="none" stroke="#5f6368" stroke-width="1.8"/></svg>
<div class="dsep" style="left:878px"></div>
<svg class="abs" style="left:899px;top:998px" width="20" height="18" viewBox="0 0 20 18"><rect x="0" y="0" width="20" height="6" fill="#b8173a"/><rect x="0" y="6" width="20" height="6" fill="#4b4cc0"/><rect x="0" y="12" width="20" height="6" fill="#1b8a35"/><path d="M2.5 1.2 V4.5 M2.5 7.2 V10.5 M2.5 13.2 V16.5" stroke="#f5b81c" stroke-width="1"/><rect x="7" y="0" width="6" height="18" fill="#d9861e"/><rect x="7" y="0.5" width="6" height="5" fill="#f2c13a"/><path d="M6.5 7 V9.5 Q6.5 12 10 12 Q13.5 12 13.5 9.5 V7" fill="none" stroke="#fff" stroke-width="1.2"/><rect x="9.3" y="8.5" width="1.4" height="3" fill="#c0c0c0"/></svg>
<div class="dl" style="left:935px">RushTime.in-opens....zip</div>
<svg class="abs" style="left:1134px;top:1003px" width="12" height="8" viewBox="0 0 12 8"><path d="M1 7 L6 2 L11 7" fill="none" stroke="#5f6368" stroke-width="1.8"/></svg>
<div class="dsep" style="left:1169px"></div>
<svg class="abs" style="left:1190px;top:998px" width="20" height="18" viewBox="0 0 20 18"><rect x="0" y="0" width="20" height="6" fill="#b8173a"/><rect x="0" y="6" width="20" height="6" fill="#4b4cc0"/><rect x="0" y="12" width="20" height="6" fill="#1b8a35"/><path d="M2.5 1.2 V4.5 M2.5 7.2 V10.5 M2.5 13.2 V16.5" stroke="#f5b81c" stroke-width="1"/><rect x="7" y="0" width="6" height="18" fill="#d9861e"/><rect x="7" y="0.5" width="6" height="5" fill="#f2c13a"/><path d="M6.5 7 V9.5 Q6.5 12 10 12 Q13.5 12 13.5 9.5 V7" fill="none" stroke="#fff" stroke-width="1.2"/><rect x="9.3" y="8.5" width="1.4" height="3" fill="#c0c0c0"/></svg>
<div class="dl" style="left:1226px">openssl-3.0.0.tar.gz</div>
<svg class="abs" style="left:1425px;top:1003px" width="12" height="8" viewBox="0 0 12 8"><path d="M1 7 L6 2 L11 7" fill="none" stroke="#5f6368" stroke-width="1.8"/></svg>
<div class="dsep" style="left:1460px"></div>
<svg class="abs" style="left:1484px;top:998px" width="15" height="18" viewBox="0 0 15 18"><path d="M0.5 0.5 H10 L14.5 5 V17.5 H0.5z" fill="#f8f9fa" stroke="#80868b" stroke-width="1"/><path d="M10 0.5 V5 H14.5" fill="none" stroke="#80868b" stroke-width="1"/></svg>
<div class="dl" style="left:1518px">proxy (7).pac</div>
<svg class="abs" style="left:1717px;top:1003px" width="12" height="8" viewBox="0 0 12 8"><path d="M1 7 L6 2 L11 7" fill="none" stroke="#5f6368" stroke-width="1.8"/></svg>
<div class="dsep" style="left:1751px;width:2px"></div>
<div id="showall"></div><div id="showt">Show all</div>
<svg class="abs" style="left:1891px;top:1001px" width="12" height="12" viewBox="0 0 12 12"><path d="M1 1 L11 11 M11 1 L1 11" stroke="#5f6368" stroke-width="2"/></svg>
<div id="taskbar"></div>
<div class="abs" style="left:322px;top:1042px;width:45px;height:38px;background:#4c5b62"></div>
<div class="abs" style="left:189px;top:1077px;width:24px;height:3px;background:#76b9ed"></div>
<div class="abs" style="left:281px;top:1077px;width:35px;height:3px;background:#76b9ed"></div>
<div class="abs" style="left:322px;top:1077px;width:45px;height:3px;background:#76b9ed"></div>
<div class="abs" style="left:373px;top:1077px;width:35px;height:3px;background:#76b9ed"></div>
<div class="abs" style="left:419px;top:1077px;width:35px;height:3px;background:#76b9ed"></div>
<div class="abs" style="left:465px;top:1077px;width:35px;height:3px;background:#76b9ed"></div>
<div class="abs" style="left:511px;top:1077px;width:35px;height:3px;background:#76b9ed"></div>
<div class="abs" style="left:557px;top:1077px;width:35px;height:3px;background:#76b9ed"></div>
<div class="abs" style="left:603px;top:1077px;width:35px;height:3px;background:#76b9ed"></div>
<div class="abs" style="left:649px;top:1077px;width:35px;height:3px;background:#76b9ed"></div>
<div class="abs" style="left:695px;top:1077px;width:35px;height:3px;background:#76b9ed"></div>
<div class="abs" style="left:741px;top:1077px;width:35px;height:3px;background:#76b9ed"></div>
<div class="abs" style="left:787px;top:1077px;width:35px;height:3px;background:#76b9ed"></div>
<div class="abs" style="left:833px;top:1077px;width:35px;height:3px;background:#76b9ed"></div>
<div class="abs" style="left:879px;top:1077px;width:35px;height:3px;background:#76b9ed"></div>
<div class="abs" style="left:213px;top:1077px;width:11px;height:3px;background:#5f8fb3"></div>
<svg class="abs" style="left:12px;top:1051px" width="21" height="21" viewBox="0 0 21 21"><path d="M0 1.7 L8 0.7 V9 H0z M9 0.6 L20 -0.8 V9 H9z M0 10 H8 V18.3 L0 17.3z M9 10 H20 V20 L9 18.6z" fill="#fff"/></svg>
<svg class="abs" style="left:57px;top:1051px" width="20" height="20" viewBox="0 0 20 20"><circle cx="12.5" cy="7.5" r="6" fill="none" stroke="#fff" stroke-width="1.6"/><path d="M8.2 11.8 L1 19" stroke="#fff" stroke-width="1.8"/></svg>
<svg class="abs" style="left:102px;top:1051px" width="20" height="20" viewBox="0 0 20 20"><circle cx="10" cy="10" r="8.2" fill="none" stroke="#fff" stroke-width="2.4"/></svg>
<svg class="abs" style="left:146px;top:1050px" width="22" height="22" viewBox="0 0 22 22"><rect x="1" y="5" width="12" height="12" fill="none" stroke="#fff" stroke-width="1.5"/><path d="M1 1.5 H13 M1 20.5 H13" stroke="#fff" stroke-width="1.5"/><path d="M18 0 V22" stroke="#fff" stroke-width="1.5" stroke-dasharray="4 2.5 5 2.5 10"/></svg>
<svg class="abs" style="left:197px;top:1052px" width="18" height="17" viewBox="0 0 18 17"><path d="M0 1 H6 L7.5 2.5 H18 V16 H0z" fill="#f3c13a"/><rect x="0" y="4" width="18" height="12.5" fill="#fcd65b"/><path d="M4 16.5 V10.5 H14 V16.5 H11.5 V13 H6.5 V16.5z" fill="#2d8ee0"/></svg>
<svg class="abs" style="left:242px;top:1051px" width="20" height="20" viewBox="0 0 20 20"><defs><radialGradient id="ffg" cx="0.6" cy="0.3" r="0.9"><stop offset="0" stop-color="#ffe14d"/><stop offset="0.45" stop-color="#ff7a2e"/><stop offset="1" stop-color="#e8276a"/></radialGradient></defs><path d="M15.5 1 Q19.5 5 19.5 11 A9.5 9 0 0 1 0.5 11 Q0.5 6 3 4 Q3 6.5 4.5 7 Q6 3 10 2.5 Q8 4.5 9 5.5 Q13 5 15.5 8 Q16.5 5 15.5 1z" fill="url(#ffg)"/><circle cx="10.8" cy="10.5" r="4.2" fill="#7542e5"/><path d="M6.5 9 Q8 6.5 11 6.5 Q8.5 8 9 10z" fill="#ff9a3c"/></svg>
<svg class="abs" style="left:288px;top:1051px" width="20" height="20" viewBox="0 0 20 20"><defs><linearGradient id="edg" x1="0" y1="1" x2="1" y2="0"><stop offset="0" stop-color="#0c59a4"/><stop offset="0.5" stop-color="#1b9de2"/><stop offset="1" stop-color="#4fdd6a"/></linearGradient></defs><circle cx="10" cy="10" r="9.5" fill="url(#edg)"/><path d="M19 12 Q17 16 12.5 16 Q7 16 6.5 11.5 Q6.5 8 10.5 7.5 Q13.5 7.5 14 10 Q14.5 12 12 12.5 L19 12.5z" fill="#1f3038"/><path d="M0.6 10.5 Q1 4 8 3 Q3 5 3.5 11 Q4 17 11 19.5 Q2 19 0.6 10.5z" fill="#0a4f96"/></svg>
<svg class="abs" style="left:334px;top:1051px" width="19" height="19" viewBox="0 0 19 19"><circle cx="9.5" cy="9.5" r="9.3" fill="#1e8e3e"/><path d="M9.5 0.2 A9.3 9.3 0 0 1 17.6 5 L9.5 5z M1.4 5 A9.3 9.3 0 0 1 9.5 0.2 L9.5 5 L5.5 11.8z" fill="#d93025"/><path d="M17.6 5 A9.3 9.3 0 0 1 9.8 18.8 L13.5 11.8 L9.5 5z" fill="#fcc934"/><circle cx="9.5" cy="9.5" r="4.3" fill="#fff"/><circle cx="9.5" cy="9.5" r="3.3" fill="#1a73e8"/></svg>
<svg class="abs" style="left:381px;top:1052px" width="18" height="18" viewBox="0 0 18 18"><defs><linearGradient id="ijg" x1="0" y1="0" x2="1" y2="1"><stop offset="0" stop-color="#f97a12"/><stop offset="0.5" stop-color="#fe2857"/><stop offset="1" stop-color="#087cfa"/></linearGradient></defs><rect width="18" height="18" fill="url(#ijg)"/><rect x="2" y="2" width="14" height="14" fill="#000"/><path d="M4 4 H7 M5.5 4 V9 M4 9 H7 M10 4 H13 M12 4 V8 Q12 9.5 10 9" stroke="#fff" stroke-width="1.2" fill="none"/><rect x="4" y="12.5" width="5.5" height="1.2" fill="#fff"/></svg>
<svg class="abs" style="left:427px;top:1051px" width="19" height="19" viewBox="0 0 19 19"><circle cx="9.5" cy="9.5" r="9.3" fill="#fff"/><path d="M7 4 V8 M12 4 V8 M4.5 7 H8 M11 7 H14.5 M4.5 12 H8 M11 12 H14.5 M7 11 V15 M12 11 V15" stroke-width="2" stroke-linecap="round" fill="none" stroke="#36c5f0"/><path d="M12 4 V8 M11 7 H14.5" stroke="#2eb67d" stroke-width="2" stroke-linecap="round"/><path d="M4.5 12 H8 M7 11 V15" stroke="#e01e5a" stroke-width="2" stroke-linecap="round"/><path d="M11 12 H14.5 M12 11 V15" stroke="#ecb22e" stroke-width="2" stroke-linecap="round"/></svg>
<svg class="abs" style="left:473px;top:1051px" width="19" height="20" viewBox="0 0 19 20"><path d="M0.5 0.5 H12 L15 3.5 V19.5 H0.5z" fill="#f4f4f4" stroke="#888" stroke-width="0.8"/><rect x="1" y="10" width="13.5" height="9" fill="#7bd33a"/><path d="M5 3 V9 M7 6 H9 M10 6 H11" stroke="#222" stroke-width="1"/><path d="M11 15 L17 1" stroke="#e3a21a" stroke-width="1.6"/></svg>
<svg class="abs" style="left:519px;top:1051px" width="18" height="20" viewBox="0 0 18 20"><path d="M9 0 L18 5 L18 15 L9 20 L0 15 L0 5z" fill="#ee6d10"/><path d="M5 11 Q4 7 8 7 Q10 4 12.5 7 Q15 7 14 11" fill="none" stroke="#fbd3b0" stroke-width="1"/><rect x="7.5" y="10" width="4" height="4" fill="none" stroke="#fbd3b0" stroke-width="0.9"/></svg>
<svg class="abs" style="left:564px;top:1051px" width="20" height="20" viewBox="0 0 20 20"><rect width="20" height="20" rx="2" fill="#d8d8d8"/><path d="M3 15 Q10 4 17 15z" fill="#f4f4f4"/><path d="M7 7 L10 1.5 L13 7 L10 13z" fill="#2a2a2a"/><circle cx="10" cy="6.5" r="2" fill="#d82020"/><path d="M2 12 H6" stroke="#6b8bb5" stroke-width="1"/></svg>
<svg class="abs" style="left:610px;top:1052px" width="20" height="19" viewBox="0 0 20 19"><path d="M6 0.5 H16 L19.5 4 V18.5 H6z" fill="#d7e6f5" stroke="#5b88c6" stroke-width="0.8"/><rect x="7" y="6" width="12" height="5" fill="#f5c64a"/><path d="M0 8.5 H6 V5.5 L11 9.5 L6 13.5 V10.5 H0z" fill="#ee7a2b"/></svg>
<svg class="abs" style="left:656px;top:1052px" width="19" height="16" viewBox="0 0 19 16"><rect x="0.5" y="0.5" width="18" height="15" fill="#eef1f3" stroke="#9aa" stroke-width="0.8"/><rect x="1.5" y="2" width="9" height="13" fill="#3b8f6a"/><rect x="14.5" y="3" width="1" height="6" fill="#3a78c8"/></svg>
<svg class="abs" style="left:702px;top:1052px" width="19" height="16" viewBox="0 0 19 16"><rect x="0.5" y="0.5" width="18" height="15" fill="#000" stroke="#777" stroke-width="0.8"/><rect x="0.5" y="0.5" width="18" height="2" fill="#c8c8c8"/><path d="M2 5 H4 M2 7 H4 M5 5 L6.5 7 M8 8 H12" stroke="#ddd" stroke-width="0.8"/></svg>
<svg class="abs" style="left:748px;top:1050px" width="21" height="21" viewBox="0 0 21 21"><path d="M10.5 0.5 L15.5 5.5 L10.5 10.5 L5.5 5.5z" fill="#f05133"/><path d="M15.5 5.5 L20.5 10.5 L15.5 15.5 L10.5 10.5z" fill="#5bb648"/><path d="M10.5 10.5 L15.5 15.5 L10.5 20.5 L5.5 15.5z" fill="#f6d855"/><path d="M5.5 5.5 L10.5 10.5 L5.5 15.5 L0.5 10.5z" fill="#6aa4f2"/><path d="M8 4 L10.5 10.5 L13 4 M10.5 10.5 V16" stroke="#222" stroke-width="1.2" fill="none"/></svg>
<svg class="abs" style="left:795px;top:1052px" width="17" height="17" viewBox="0 0 17 17"><path d="M8.5 0.5 L10 2.5 L12.5 1.8 L13 4.3 L15.5 5 L14.5 7.3 L16.5 8.5 L14.5 9.8 L15.5 12 L13 12.7 L12.5 15.2 L10 14.5 L8.5 16.5 L7 14.5 L4.5 15.2 L4 12.7 L1.5 12 L2.5 9.8 L0.5 8.5 L2.5 7.3 L1.5 5 L4 4.3 L4.5 1.8 L7 2.5z" fill="#fff"/><circle cx="8.5" cy="8.5" r="3.5" fill="#1f2f3b"/></svg>
<svg class="abs" style="left:840px;top:1051px" width="20" height="20" viewBox="0 0 20 20"><ellipse cx="9" cy="12" rx="9" ry="7" fill="#cfe3f5"/><circle cx="4.5" cy="11" r="1.5" fill="#e33"/><circle cx="7.5" cy="8" r="1.5" fill="#3a3"/><circle cx="11.5" cy="8" r="1.5" fill="#f6c333"/><circle cx="6" cy="14.5" r="1.3" fill="#36c"/><path d="M10 20 L18 2" stroke="#e79a2b" stroke-width="1.8"/></svg>
<svg class="abs" style="left:886px;top:1051px" width="20" height="20" viewBox="0 0 20 20"><rect x="1" y="0.5" width="16" height="13" fill="#dfe3e8" stroke="#8a96a3" stroke-width="0.8"/><path d="M2 3 H16 M2 5.5 H16" stroke="#8a96a3" stroke-width="0.8"/><rect x="4" y="11" width="16" height="9" fill="#d42a2a"/><rect x="9" y="9" width="6" height="2.5" fill="none" stroke="#a11" stroke-width="1"/></svg>
<svg class="abs" style="left:1615px;top:1056px" width="16" height="9" viewBox="0 0 16 9"><path d="M0.5 8.5 L8 1 L15.5 8.5" fill="none" stroke="#fff" stroke-width="1.2"/></svg>
<svg class="abs" style="left:1646px;top:1051px" width="15" height="19" viewBox="0 0 15 19"><path d="M0 0 H15 V12 L7.5 19 L0 12z" fill="#d8b53a"/><path d="M4 1 V14 M7.5 1 V17 M11 1 V14" stroke="#f6e7a4" stroke-width="1.2"/></svg>
<svg class="abs" style="left:1674px;top:1056px" width="19" height="11" viewBox="0 0 19 11"><rect x="0.75" y="0.75" width="16" height="9.5" fill="none" stroke="#fff" stroke-width="1.5"/><rect x="2.5" y="2.5" width="7" height="6" fill="#fff"/><rect x="17" y="3.5" width="2" height="4" fill="#fff"/></svg>
<svg class="abs" style="left:1706px;top:1054px" width="16" height="16" viewBox="0 0 16 16"><path d="M1 15 A14 14 0 0 1 15 1 M4 15 A11 11 0 0 1 15 4 M7 15 A8 8 0 0 1 15 7" fill="none" stroke="#fff" stroke-width="1.1"/><circle cx="13.5" cy="13.5" r="1.6" fill="#fff"/></svg>
<svg class="abs" style="left:1733px;top:1055px" width="19" height="13" viewBox="0 0 19 13"><path d="M0.5 4 H3.5 L7.5 0.7 V12.3 L3.5 9 H0.5z" fill="none" stroke="#fff" stroke-width="1.1"/><path d="M11 3.5 L17 9.5 M17 3.5 L11 9.5" stroke="#fff" stroke-width="1.2"/></svg>
<div class="abs" style="left:1767px;top:1053px;font-size:14.4px;letter-spacing:-0.4px;color:#fff">ENG</div>
<div class="abs" style="left:1811px;top:1053px;font-size:14.4px;letter-spacing:-0.3px;color:#fff">06:26</div>
<svg class="abs" style="left:1868px;top:1051px" width="21" height="21" viewBox="0 0 21 21"><path d="M0 0 H20.5 V16.5 H11.5 L10 19 L8.5 16.5 H0z" fill="#fff"/><path d="M4 4.5 H16.5 M4 8 H16.5 M4 11.5 H12" stroke="#1b2a44" stroke-width="1.3"/></svg>
<div class="abs" style="left:1915px;top:1042px;width:1px;height:38px;background:#5a6478"></div>

</body></html>
